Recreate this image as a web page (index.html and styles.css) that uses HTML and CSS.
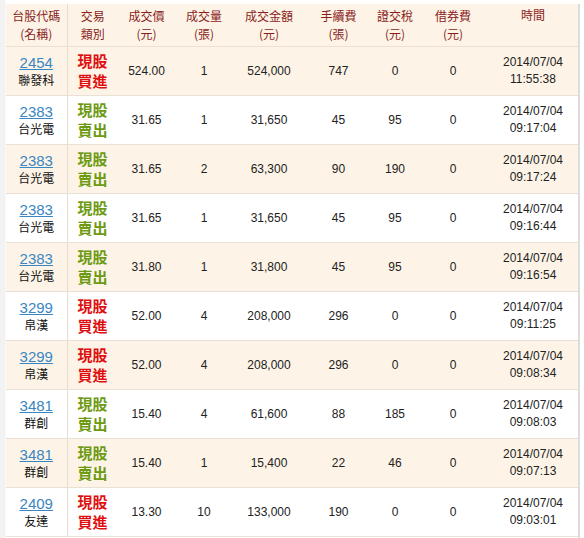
FILE: index.html
```html
<!DOCTYPE html>
<html>
<head>
<meta charset="utf-8">
<link rel="stylesheet" href="styles.css">
</head>
<body>
<div class="page">
  <div class="frame">
    <table class="trades">
      <colgroup>
        <col class="c1"><col class="c2"><col class="c3"><col class="c4"><col class="c5"><col class="c6"><col class="c7"><col class="c8"><col class="c9">
      </colgroup>
      <thead>
        <tr>
          <th class="sep">台股代碼<br>(名稱)</th>
          <th>交易<br>類別</th>
          <th>成交價<br>(元)</th>
          <th>成交量<br>(張)</th>
          <th>成交金額<br>(元)</th>
          <th>手續費<br>(張)</th>
          <th>證交稅<br>(元)</th>
          <th>借券費<br>(元)</th>
          <th class="time-h">時間<br>&nbsp;</th>
        </tr>
      </thead>
      <tbody>
        <tr class="alt">
          <td class="sep"><a class="code" href="#">2454</a><span class="name">聯發科</span></td>
          <td class="type buy">現股<br>買進</td>
          <td>524.00</td><td>1</td><td>524,000</td><td>747</td><td>0</td><td>0</td>
          <td class="time">2014/07/04<br>11:55:38</td>
        </tr>
        <tr>
          <td class="sep"><a class="code" href="#">2383</a><span class="name">台光電</span></td>
          <td class="type sell">現股<br>賣出</td>
          <td>31.65</td><td>1</td><td>31,650</td><td>45</td><td>95</td><td>0</td>
          <td class="time">2014/07/04<br>09:17:04</td>
        </tr>
        <tr class="alt">
          <td class="sep"><a class="code" href="#">2383</a><span class="name">台光電</span></td>
          <td class="type sell">現股<br>賣出</td>
          <td>31.65</td><td>2</td><td>63,300</td><td>90</td><td>190</td><td>0</td>
          <td class="time">2014/07/04<br>09:17:24</td>
        </tr>
        <tr>
          <td class="sep"><a class="code" href="#">2383</a><span class="name">台光電</span></td>
          <td class="type sell">現股<br>賣出</td>
          <td>31.65</td><td>1</td><td>31,650</td><td>45</td><td>95</td><td>0</td>
          <td class="time">2014/07/04<br>09:16:44</td>
        </tr>
        <tr class="alt">
          <td class="sep"><a class="code" href="#">2383</a><span class="name">台光電</span></td>
          <td class="type sell">現股<br>賣出</td>
          <td>31.80</td><td>1</td><td>31,800</td><td>45</td><td>95</td><td>0</td>
          <td class="time">2014/07/04<br>09:16:54</td>
        </tr>
        <tr>
          <td class="sep"><a class="code" href="#">3299</a><span class="name">帛漢</span></td>
          <td class="type buy">現股<br>買進</td>
          <td>52.00</td><td>4</td><td>208,000</td><td>296</td><td>0</td><td>0</td>
          <td class="time">2014/07/04<br>09:11:25</td>
        </tr>
        <tr class="alt">
          <td class="sep"><a class="code" href="#">3299</a><span class="name">帛漢</span></td>
          <td class="type buy">現股<br>買進</td>
          <td>52.00</td><td>4</td><td>208,000</td><td>296</td><td>0</td><td>0</td>
          <td class="time">2014/07/04<br>09:08:34</td>
        </tr>
        <tr>
          <td class="sep"><a class="code" href="#">3481</a><span class="name">群創</span></td>
          <td class="type sell">現股<br>賣出</td>
          <td>15.40</td><td>4</td><td>61,600</td><td>88</td><td>185</td><td>0</td>
          <td class="time">2014/07/04<br>09:08:03</td>
        </tr>
        <tr class="alt">
          <td class="sep"><a class="code" href="#">3481</a><span class="name">群創</span></td>
          <td class="type sell">現股<br>賣出</td>
          <td>15.40</td><td>1</td><td>15,400</td><td>22</td><td>46</td><td>0</td>
          <td class="time">2014/07/04<br>09:07:13</td>
        </tr>
        <tr>
          <td class="sep"><a class="code" href="#">2409</a><span class="name">友達</span></td>
          <td class="type buy">現股<br>買進</td>
          <td>13.30</td><td>10</td><td>133,000</td><td>190</td><td>0</td><td>0</td>
          <td class="time">2014/07/04<br>09:03:01</td>
        </tr>
      </tbody>
    </table>
  </div>
</div>
</body>
</html>
```

FILE: styles.css
```css
html, body {
  margin: 0;
  padding: 0;
  background: #ffffff;
}

.page {
  width: 584px;
  height: 538px;
  display: flex;
  background: linear-gradient(to right, #f2f2f2 0, #f2f2f2 5px, #ffffff 6px);
  padding: 4px 0 0 6px;
  box-sizing: border-box;
}

.frame {
  width: 572px;
  border-right: 2px solid #dcdcdc;
  background: #ffffff;
  align-self: stretch;
}

.trades {
  width: 572px;
  border-collapse: collapse;
  table-layout: fixed;
  font-family: "Liberation Sans", Arial, "Noto Sans CJK TC", sans-serif;
  font-size: 12px;
  color: #222222;
}

.c1 { width: 61px; }
.c2 { width: 51px; }
.c3 { width: 57px; }
.c4 { width: 58px; }
.c5 { width: 72px; }
.c6 { width: 67px; }
.c7 { width: 46px; }
.c8 { width: 70px; }
.c9 { width: 90px; }

.trades th {
  background: #fdf4e7;
  color: #8a1c1c;
  font-weight: normal;
  font-size: 12px;
  line-height: 18px;
  height: 40px;
  padding: 0;
  text-align: center;
  vertical-align: middle;
  border-bottom: 1px solid #e9e0d2;
  font-family: "Noto Sans CJK TC", "Liberation Sans", sans-serif;
}

.trades th.time-h {
  vertical-align: top;
  padding-top: 2px;
}

.trades td {
  height: 48px;
  padding: 0;
  text-align: center;
  vertical-align: middle;
  border-bottom: 1px solid #e9e1d5;
  line-height: 17px;
}

.trades tr.alt td {
  background: #fdf4e7;
}

.trades .sep {
  border-right: 1px solid #e6ddd0;
}

.code {
  display: block;
  color: #3a86c2;
  font-size: 15px;
  line-height: 17px;
  text-decoration: underline;
  text-underline-offset: 1px;
}

.name {
  display: block;
  font-family: "Noto Sans CJK TC", sans-serif;
  font-size: 12px;
  line-height: 17px;
  color: #111111;
}

.trades td.type {
  font-family: "Noto Sans CJK TC", sans-serif;
  font-weight: bold;
  font-size: 15px;
  line-height: 20px;
  text-align: left;
  padding-left: 10px;
}

.buy { color: #e00f0f; }
.sell { color: #6e9a12; }

.trades td.time {
  line-height: 17px;
}
```
